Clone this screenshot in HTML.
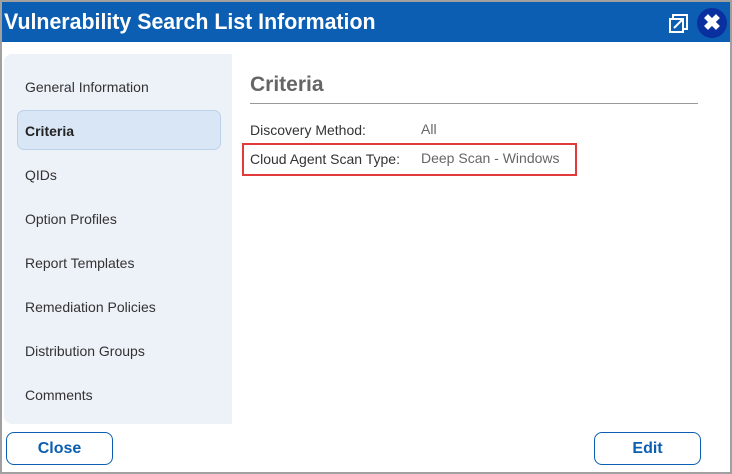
<!DOCTYPE html>
<html><head><style>
body{margin:0;width:732px;height:474px;background:#fff;font-family:"Liberation Sans",sans-serif;position:relative;overflow:hidden}
.frame{position:absolute;left:0;top:0;width:728px;height:470px;border:2px solid #a0a0a0}
.title{position:absolute;left:2px;top:2px;width:728px;height:40px;background:#0b5eb1}
.title span{position:absolute;left:2px;top:7px;color:#fff;font-weight:bold;font-size:22px;transform:scaleX(0.97);transform-origin:left;white-space:nowrap}
.side{position:absolute;left:4px;top:54px;width:228px;height:370px;background:#edf1f8;border-radius:8px 0 0 8px}
.item{position:absolute;left:25px;font-size:14px;color:#333}
.sel{position:absolute;left:17px;top:110px;width:202px;height:38px;background:#d9e6f5;border:1px solid #bcd1ea;border-radius:7px}
h1{position:absolute;left:250px;top:73px;margin:0;font-size:21px;color:#666;font-weight:bold}
.rule{position:absolute;left:250px;top:103px;width:448px;height:1px;background:#999}
.t{position:absolute;font-size:14px;color:#333}
.v{position:absolute;font-size:14px;color:#666}
.red{position:absolute;left:242px;top:143px;width:331px;height:29px;border:2px solid #e23a3a}
.btn{position:absolute;top:432px;width:105px;height:31px;border:1px solid #0b5eb1;border-radius:8px;color:#0b5eb1;font-weight:bold;font-size:16px;text-align:center;line-height:31px}
</style></head><body>
<div class="frame"></div>
<div class="title"><span>Vulnerability Search List Information</span>
<svg style="position:absolute;left:667px;top:12px" width="20" height="20" viewBox="0 0 20 20"><rect x="4" y="1" width="14" height="14" fill="none" stroke="#fff" stroke-width="2"/><rect x="1" y="5" width="13" height="13" fill="#0b5eb1" stroke="#fff" stroke-width="2"/><path d="M5 14 L13 6 M8 5 H14 V11" stroke="#fff" stroke-width="2" fill="none"/></svg>
<div style="position:absolute;left:695px;top:6px;width:30px;height:30px;border-radius:50%;background:#0a2f9e;color:#fff;font-weight:bold;font-size:22px;text-align:center;line-height:30px">✖</div>
</div>
<div class="side"></div>
<div class="sel"></div>
<div class="item" style="top:79px">General Information</div>
<div class="item" style="top:123px;font-weight:bold;color:#222">Criteria</div>
<div class="item" style="top:167px">QIDs</div>
<div class="item" style="top:211px">Option Profiles</div>
<div class="item" style="top:255px">Report Templates</div>
<div class="item" style="top:299px">Remediation Policies</div>
<div class="item" style="top:343px">Distribution Groups</div>
<div class="item" style="top:387px">Comments</div>
<h1>Criteria</h1>
<div class="rule"></div>
<div class="t" style="left:250px;top:122px">Discovery Method:</div>
<div class="v" style="left:421px;top:121px">All</div>
<div class="red"></div>
<div class="t" style="left:250px;top:151px">Cloud Agent Scan Type:</div>
<div class="v" style="left:421px;top:150px">Deep Scan - Windows</div>
<div class="btn" style="left:6px">Close</div>
<div class="btn" style="left:594px">Edit</div>
</body></html>
